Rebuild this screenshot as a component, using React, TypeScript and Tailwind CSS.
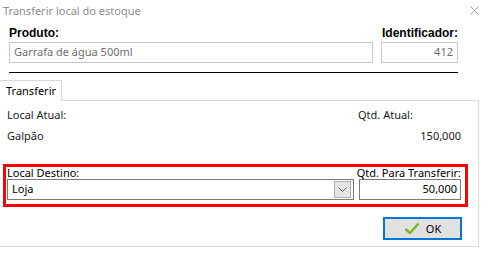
import React from "react";

export default function App() {
  return (
    <div className="w-[487px] h-[257px] bg-white relative overflow-hidden text-[11px] text-[#1a1a1a] font-['Noto_Sans',sans-serif]">
      {/* title bar */}
      <div className="flex items-start justify-between h-[24px] pl-[3px] pr-[8px]">
        <span className="text-[11px] leading-[22px] text-[#8c8c8c]">Transferir local do estoque</span>
        <svg width="9" height="9" viewBox="0 0 9 9" className="mt-[6px]">
          <path d="M0.5 0.5 L8.5 8.5 M8.5 0.5 L0.5 8.5" stroke="#9a9a9a" strokeWidth="1" />
        </svg>
      </div>

      {/* produto */}
      <div className="pl-[9px] pr-[29px]">
        <div className="flex justify-between h-[18px] items-end font-['Liberation_Sans',sans-serif] font-bold text-[12px] text-black">
          <span>Produto:</span>
          <span>Identificador:</span>
        </div>
        <div className="flex gap-[8px]">
          <div className="flex-1 h-[21px] border border-[#c8c8c8] px-[4px] flex items-center text-[#6e6e6e]">
            Garrafa de água 500ml
          </div>
          <div className="w-[77px] h-[21px] border border-[#c8c8c8] px-[4px] flex items-center justify-end text-[#6e6e6e]">
            412
          </div>
        </div>
        <div className="h-px bg-black mt-[9px]" />
      </div>

      {/* tabs */}
      <div className="mt-[7px] flex items-end h-[21px]">
        <div className="w-[62px] h-[21px] border-t border-r border-[#d9d9d9] flex items-center pl-[6px] text-black">
          Transferir
        </div>
        <div className="w-[417px] border-b border-[#d9d9d9]" />
      </div>
      <div className="w-[479px] h-[146px] border-r border-b border-[#d9d9d9]">
        <div className="flex justify-between pl-[7px] pr-[18px] pt-[5px] leading-[18px]">
          <span>Local Atual:</span>
          <span className="w-[102px]">Qtd. Atual:</span>
        </div>
        <div className="flex justify-between pl-[7px] pr-[17px] mt-[3px] leading-[18px]">
          <span>Galpão</span>
          <span>150,000</span>
        </div>

        {/* highlighted row */}
        <div className="mt-[19px] ml-[3px] w-[465px] h-[43px] border-[3px] border-[#ff0000] pl-[1px] pr-[4px]">
          <div className="flex justify-between leading-[12px] text-black">
            <span>Local Destino:</span>
            <span>Qtd. Para Transferir:</span>
          </div>
          <div className="flex gap-[5px]">
            <div className="w-[347px] h-[21px] border border-[#7a7a7a] flex items-center justify-between pl-[4px] pr-[2px] text-black">
              <span>Loja</span>
              <div className="w-[17px] h-[17px] bg-[#e5e5e5] border border-[#adadad] flex items-center justify-center">
                <svg width="9" height="6" viewBox="0 0 9 6">
                  <path d="M0.5 0.5 L4.5 4.5 L8.5 0.5" stroke="#606060" strokeWidth="1" fill="none" />
                </svg>
              </div>
            </div>
            <div className="flex-1 h-[21px] border border-[#7a7a7a] flex items-center justify-end pr-[3px] text-black">
              50,000
            </div>
          </div>
        </div>

        <div className="flex justify-end pr-[16px] mt-[10px]">
          <button className="w-[79px] h-[23px] border-2 border-[#0078d7] bg-[#e1e1e1] flex items-center justify-center gap-[6px] text-black">
            <svg width="16" height="13" viewBox="0 0 16 13">
              <path d="M1.5 7 L6 11 L14.5 1.5" stroke="#7cb518" strokeWidth="2.4" fill="none" strokeLinejoin="round" />
            </svg>
            <span className="leading-[14px]">OK</span>
          </button>
        </div>
      </div>
    </div>
  );
}
